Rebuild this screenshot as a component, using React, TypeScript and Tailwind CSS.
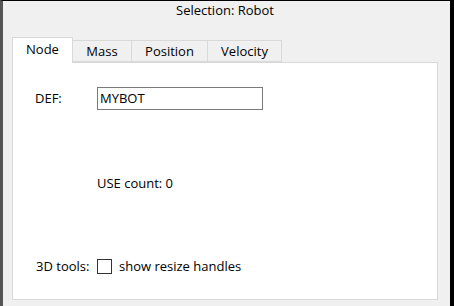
const tabs = [
  { label: "Node", width: "w-[61px]", active: true },
  { label: "Mass", width: "w-[59px]", active: false },
  { label: "Position", width: "w-[76px]", active: false },
  { label: "Velocity", width: "w-[74px]", active: false },
];

export default function App() {
  return (
    <div
      className="relative flex h-[306px] w-[454px] flex-col border-t border-r-4 border-l-[3px] border-t-black border-r-black border-l-[#555] bg-[#f0f0f0] pr-[12px] pb-[6px] pl-[9px] text-[13px] leading-none text-black"
      style={{ fontFamily: '"Open Sans", "Noto Sans", sans-serif' }}
    >
      <div className="flex h-[19px] items-center justify-center">
        Selection: Robot
      </div>

      {/* tab strip */}
      <div className="mt-[17px] flex h-[25px] items-end">
        {tabs.map((t) =>
          t.active ? (
            <div
              key={t.label}
              className={`${t.width} relative z-10 -mb-px flex h-[26px] items-center justify-center border border-b-0 border-[#d9d9d9] bg-white pb-[2px]`}
            >
              {t.label}
            </div>
          ) : (
            <div
              key={t.label}
              className={`${t.width} flex h-[22px] items-center justify-center border border-l-0 border-[#d9d9d9] bg-[#f0f0f0]`}
            >
              {t.label}
            </div>
          ),
        )}
      </div>

      {/* panel */}
      <div className="flex flex-1 flex-col border border-[#d9d9d9] bg-white pt-[24px] pl-[22px]">
        <div className="flex h-[23px] items-center">
          <span className="w-[62px]">DEF:</span>
          <div className="flex h-[23px] w-[166px] items-center border border-[#7a7a7a] pl-[2px]">
            MYBOT
          </div>
        </div>

        <div className="mt-[62px] flex h-[23px] items-center pl-[62px]">
          USE count: 0
        </div>

        <div className="mt-[63px] flex h-[16px] items-center">
          <span className="w-[62px] pl-px">3D tools:</span>
          <div className="h-[15px] w-[15px] border border-[#333] bg-white" />
          <span className="ml-[7px]">show resize handles</span>
        </div>
      </div>
    </div>
  );
}
